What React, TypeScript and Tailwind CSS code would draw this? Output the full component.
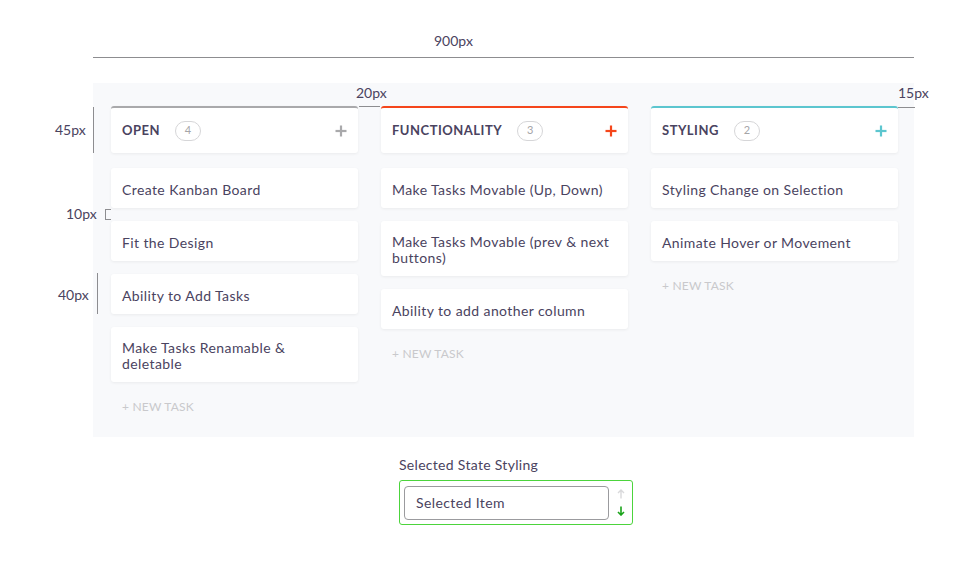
import React from "react";

type Col = {
  title: string;
  count: number;
  color: string;
  plus: string;
  tasks: string[];
};

const cols: Col[] = [
  {
    title: "OPEN",
    count: 4,
    color: "border-t-[#a9a9ab]",
    plus: "text-[#a9a9ab]",
    tasks: ["Create Kanban Board", "Fit the Design", "Ability to Add Tasks", "Make Tasks Renamable & deletable"],
  },
  {
    title: "FUNCTIONALITY",
    count: 3,
    color: "border-t-[#f5461b]",
    plus: "text-[#f5461b]",
    tasks: ["Make Tasks Movable (Up, Down)", "Make Tasks Movable (prev & next buttons)", "Ability to add another column"],
  },
  {
    title: "STYLING",
    count: 2,
    color: "border-t-[#5cc6cf]",
    plus: "text-[#5cc6cf]",
    tasks: ["Styling Change on Selection", "Animate Hover or Movement"],
  },
];

function Plus({ className }: { className: string }) {
  return (
    <svg width="12" height="12" viewBox="0 0 12 12" className={className}>
      <rect x="4.9" y="0.5" width="2.2" height="11" fill="currentColor" />
      <rect x="0.5" y="4.9" width="11" height="2.2" fill="currentColor" />
    </svg>
  );
}

function Column({ col }: { col: Col }) {
  return (
    <div className="w-[247px] flex flex-col">
      <div
        className={`h-[47px] bg-white border-t-2 ${col.color} rounded-[3px] shadow-[0_1px_3px_rgba(0,0,0,0.06)] flex items-center pl-[11px] pr-[11px]`}
      >
        <span className="text-[13px] font-bold tracking-[0.5px] text-[#4a4360]">{col.title}</span>
        <span className="ml-[15px] h-[20px] w-[26px] rounded-full border border-[#d6d6d8] text-[11px] text-[#a5a5a8] flex items-center justify-center">
          {col.count}
        </span>
        <span className="ml-auto flex items-center">
          <Plus className={col.plus} />
        </span>
      </div>
      <div className="mt-[15px] flex flex-col gap-[13px]">
        {col.tasks.map((t) => (
          <div
            key={t}
            className="min-h-[40px] bg-white rounded-[3px] shadow-[0_1px_3px_rgba(0,0,0,0.06)] flex items-center px-[11px] pt-[13px] pb-[10px] text-[14px] leading-[16px] tracking-[0.4px] text-[#4a4360]"
          >
            {t}
          </div>
        ))}
      </div>
      <div className="mt-[16px] pl-[11px] text-[12px] tracking-[0.2px] text-[#c9c9cc]">+ NEW TASK</div>
    </div>
  );
}

export default function App() {
  return (
    <div
      className="relative w-[969px] h-[567px] bg-white text-[#4a4360]"
      style={{ fontFamily: "Lato, 'Open Sans', sans-serif" }}
    >
      {/* top dimension */}
      <div className="h-[83px] pt-[32px] pl-[93px]">
        <div className="w-[821px]">
          <div className="pl-[341px] text-[14px] leading-[18px]">900px</div>
          <div className="mt-[7px] h-px bg-[#8d8d90]" />
        </div>
      </div>

      {/* board */}
      <div className="ml-[93px] w-[821px] h-[354px] bg-[#f8f9fb] pt-[23px] pl-[18px] flex gap-[23px]">
        {cols.map((c) => (
          <Column key={c.title} col={c} />
        ))}
      </div>

      {/* annotations */}
      <div className="absolute left-[55px] top-[121px] text-[14px] leading-[18px]">45px</div>
      <div className="absolute left-[93px] top-[107px] w-px h-[46px] bg-[#8d8d90]" />
      <div className="absolute left-[66px] top-[205px] text-[14px] leading-[18px]">10px</div>
      <div className="absolute left-[105px] top-[209px] w-[6px] h-[11px] border border-r-0 border-[#8d8d90]" />
      <div className="absolute left-[58px] top-[286px] text-[14px] leading-[18px]">40px</div>
      <div className="absolute left-[97px] top-[273px] w-px h-[41px] bg-[#8d8d90]" />
      <div className="absolute left-[356px] top-[84px] text-[14px] leading-[18px]">20px</div>
      <div className="absolute left-[359px] top-[106px] w-[21px] h-px bg-[#8d8d90]" />
      <div className="absolute left-[898px] top-[84px] text-[14px] leading-[18px]">15px</div>
      <div className="absolute left-[898px] top-[107px] w-[17px] h-px bg-[#8d8d90]" />

      {/* selected state */}
      <div className="pl-[399px] pt-[19px]">
        <div className="text-[14px] leading-[18px] tracking-[0.3px]">Selected State Styling</div>
        <div className="mt-[6px] w-[234px] h-[45px] border border-[#4cd43c] rounded-[3px] flex items-center pl-[4px]">
          <div className="w-[205px] h-[34px] border border-[#9b9b9e] rounded-[4px] flex items-center pl-[11px] text-[14px] tracking-[0.4px]">
            Selected Item
          </div>
          <div className="ml-[8px] flex flex-col items-center gap-[7px]">
            <svg width="8" height="10" viewBox="0 0 8 10">
              <path d="M4 9.5V1M1 4l3-3 3 3" stroke="#d9d9db" strokeWidth="1.4" fill="none" />
            </svg>
            <svg width="8" height="10" viewBox="0 0 8 10">
              <path d="M4 0.5V9M1 6l3 3 3-3" stroke="#19a319" strokeWidth="1.6" fill="none" />
            </svg>
          </div>
        </div>
      </div>
    </div>
  );
}
